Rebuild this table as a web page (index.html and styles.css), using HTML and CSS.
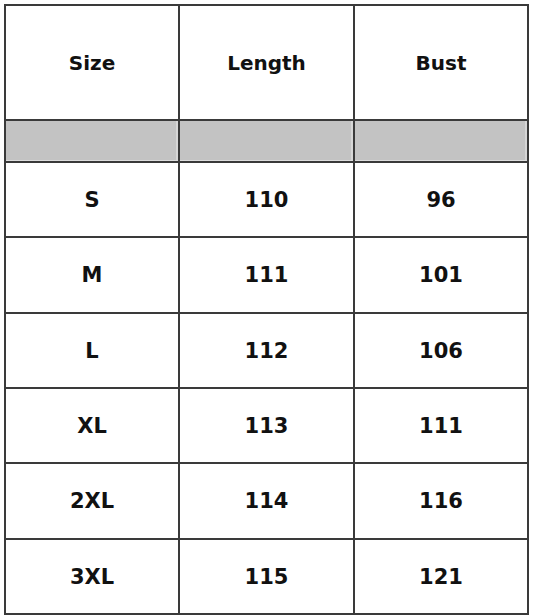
FILE: index.html
```html
<!DOCTYPE html>
<html>
<head>
<meta charset="utf-8">
<link rel="stylesheet" href="styles.css">
</head>
<body>
<div class="chart">
  <div class="cell head">Size</div>
  <div class="cell head">Length</div>
  <div class="cell head">Bust</div>
  <div class="cell gray"></div>
  <div class="cell gray"></div>
  <div class="cell gray"></div>
  <div class="cell">S</div><div class="cell">110</div><div class="cell">96</div>
  <div class="cell">M</div><div class="cell">111</div><div class="cell">101</div>
  <div class="cell">L</div><div class="cell">112</div><div class="cell">106</div>
  <div class="cell">XL</div><div class="cell">113</div><div class="cell">111</div>
  <div class="cell">2XL</div><div class="cell">114</div><div class="cell">116</div>
  <div class="cell">3XL</div><div class="cell">115</div><div class="cell">121</div>
</div>
</body>
</html>
```
FILE: styles.css
```css
html, body {
  margin: 0;
  padding: 0;
  background: #ffffff;
}
body {
  padding: 4px 0 0 4px;
  font-family: "Comic Sans MS", "DejaVu Sans", sans-serif;
  font-weight: bold;
  color: #111111;
}
.chart {
  display: grid;
  width: max-content;
  grid-template-columns: 172px 173px 172px;
  grid-template-rows: 113px 40px 73px 74px 73px 73px 74px 73px;
  gap: 2px;
  padding: 2px;
  background: #3a3a3a;
}
.cell {
  background: #ffffff;
  display: flex;
  align-items: center;
  justify-content: center;
  font-size: 21px;
}
.head {
  font-size: 20px;
}
.gray {
  background: #c3c3c3;
  box-shadow: inset 0 -1px 0 #dcdcdc, inset -2px 0 0 #d6d6d6;
}
```
